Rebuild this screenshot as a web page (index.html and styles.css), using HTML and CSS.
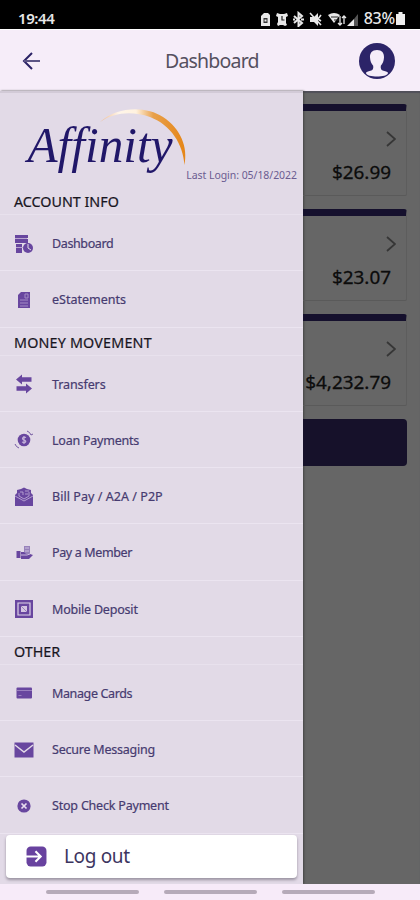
FILE: index.html
```html
<!DOCTYPE html>
<html lang="en">
<head>
<meta charset="utf-8">
<title>Dashboard</title>
<link rel="stylesheet" href="styles.css">
</head>
<body>
<div class="status">
  <span class="clock">19:44</span>
  <svg class="status-icons" width="102" height="16" viewBox="0 0 102 16" fill="#e8e8e8">
    <path d="M1 5 4 2h4l2 2v11H1z"/><path d="M3.500 7h4v5h-4z" fill="#333"/><path d="M4.500 8.500h2v2h-2z"/>
    <path d="M17 2l3 1h4l3-1 1 3-2 1v6l1 2-2 1-2-1h-3l-2 1-1-2 1-2V6l-2-1z"/><path d="M22 5v4h2.500" fill="none" stroke="#222" stroke-width="1.200"/>
    <path d="M34 5l8 7-3.500 3V2L42 5l-8 7M33 8.500h2M41 8.500h3" fill="none" stroke="#e8e8e8" stroke-width="2"/>
    <path d="M50 6h4l4-4v13l-4-4h-4z"/><path d="M50 2l11 12M61 4l-3 4 3 2" stroke="#e8e8e8" stroke-width="1.600" fill="none"/>
    <path d="M68 4q6-4 12 0l-6 8z"/><path d="M71 6h7M74 9h5" stroke="#222"/><path d="M80 5v9M78 12l2 2 2-2M84 13V5M82 7l2-2 2 2" fill="none" stroke="#e8e8e8" stroke-width="1.300"/>
    <path d="M87 15 94 8v7z"/><path d="M94 8l4-5v12h-4z" fill="#555"/>
  </svg>
  <span class="percent">83%</span>
  <svg width="9" height="13" viewBox="0 0 9 13" fill="#eee"><path d="M2.500 0h4v2H9v11H0V2h2.500z"/></svg>
</div>
<header class="header">
  <svg class="back" width="19" height="18" viewBox="0 0 19 18" fill="none" stroke="#2b2266" stroke-width="2"><path d="M10 1 2 9l8 8"/><path d="M2 9h16" stroke="#5c5585"/></svg>
  <h1>Dashboard</h1>
  <svg class="avatar" width="36" height="36" viewBox="0 0 36 36"><circle cx="18" cy="18" r="18" fill="#2c2468"/><path d="M18 7c5 0 7.200 3 7 7.500-.2 3.800-1.300 6.200-3.200 8.200-.4 3 .4 4.500 2.700 5.100 2.500.8 4.500 1 4.500 2.200 0 2.500-6 3.500-11 3.500S7 32.500 7 30c0-1.200 2-1.400 4.500-2.200 2.300-.6 3.100-2.100 2.700-5.100-1.900-2-3-4.400-3.200-8.200C10.800 10 13 7 18 7z" fill="#f5edf9"/></svg>
</header>
<main class="stage">
  <aside class="drawer">
    <div class="brand">
      <svg class="logo" width="170" height="80" viewBox="20 100 170 80">
        <defs><linearGradient id="arc" x1="100" x2="186" y1="0" y2="0" gradientUnits="userSpaceOnUse"><stop offset="0" stop-color="#eebc91"/><stop offset=".22" stop-color="#fff5e9"/><stop offset=".42" stop-color="#fff2df"/><stop offset=".62" stop-color="#e8a04b"/><stop offset="1" stop-color="#e58516"/></linearGradient></defs>
        <path d="M100 122C118 106 146 106 163 117 181 129 188 147 184.500 165 183 144 171 125 150 117 132 111 115 112 100 122z" fill="url(#arc)"/>
        <text x="27.500" y="162" textLength="145" lengthAdjust="spacingAndGlyphs" class="wordmark">Affinity</text>
      </svg>
      <p class="last">Last Login: 05/18/2022</p>
    </div>
    <h2 class="s1">ACCOUNT INFO</h2>
    <a class="row"><svg viewBox="0 0 20 20"><path d="M1 1h13v3H1zM1 5h13v4H1zM2 10h6v3H2zM2 14h6v5H2z"/><circle cx="14" cy="14" r="5"/><path d="M14 10v4l3 2" stroke="#e3dbe8" fill="none"/><path d="M1 4.500h12M2 13.500h7" stroke="#b9a5d0" fill="none"/></svg><span class="t1">Dashboard</span></a>
    <a class="row"><svg viewBox="0 0 20 20"><path d="M7 2h9v16H4V5z"/><path d="M11 4h3v4h-3zM6 10h8M6 13h8M6 16h8" stroke="#a48cc6" fill="none"/></svg><span class="t2">eStatements</span></a>
    <h2 class="s2">MONEY MOVEMENT</h2>
    <a class="row"><svg viewBox="0 0 20 20"><path d="M2 5.500 8 .5v2.800h9.500v4.400H8v2.800zM18 14.500l-6-5v2.800H2.500v4.400H12v2.800z"/></svg><span class="t3">Transfers</span></a>
    <a class="row"><svg viewBox="0 0 20 20"><circle cx="10" cy="10" r="6.300"/><path d="M12 7.500c-3-1.500-5 1.500-2 2.500s2 3.500-2 2M10 6v8" stroke="#c3b1d8" fill="none" stroke-width="1.200"/><path d="M1 14q1 3 4 4M13 1q3 1 4 4l2-1" fill="none" stroke="#755aa2"/></svg><span class="t4">Loan Payments</span></a>
    <a class="row"><svg viewBox="0 0 20 20"><path d="M1 8l2-2V3l4-1 3-1.500L13 2l4 1v3l2 2v11H1z"/><path d="M1 9l9 5 9-5M5 6v3l5 3 5-3V5M6 5h3v3M11 4h4M11 7h3" stroke="#b9a5d4" stroke-width=".9" fill="none"/></svg><span class="t5">Bill Pay / A2A / P2P</span></a>
    <a class="row"><svg viewBox="0 0 20 20"><path d="M10 3h6v9h-6z" fill="#9782ba"/><path d="M2.500 8h4v7h-4zM7 9h3l2 2h4l3 1-4 4H7z"/><path d="M7 12h6l3-1M11 5h4M11 8h4" stroke="#cdbde0" fill="none"/></svg><span class="t6">Pay a Member</span></a>
    <a class="row"><svg viewBox="0 0 20 20"><path d="M1 1h18v18H1z"/><path d="M4 4h12v12H4z" fill="none" stroke="#ded3e8" stroke-width="1.200"/><path d="M7 7h6v6H7z" fill="#d4c5e1"/><path d="M7 7l6 6" stroke="#9782ba"/></svg><span class="t7">Mobile Deposit</span></a>
    <h2 class="s3">OTHER</h2>
    <a class="row"><svg viewBox="0 0 20 20"><rect x="2.500" y="4.500" width="15.500" height="11" rx="1"/><path d="M3 7.500h15M4.500 12.500h3" stroke="#9a80c0" fill="none"/></svg><span class="t8">Manage Cards</span></a>
    <a class="row"><svg viewBox="0 0 20 20"><path d="M.5 2.500h19v15H.5z"/><path d="M1 5l9 7 9-7" stroke="#e3dbe8" stroke-width="1.500" fill="none"/></svg><span class="t9">Secure Messaging</span></a>
    <a class="row"><svg viewBox="0 0 20 20"><circle cx="10" cy="10" r="6.600"/><path d="M7.500 7.500l5 5M12.500 7.500l-5 5" stroke="#e8ddf0" stroke-width="1.700"/></svg><span class="t10">Stop Check Payment</span></a>
    <a class="logout"><svg viewBox="0 0 20 20"><rect x=".5" y=".5" width="19" height="19" rx="4"/><path d="M0 10h14M9 5l5 5-5 5" stroke="#fff" stroke-width="2" fill="none"/></svg><span>Log out</span></a>
  </aside>
  <section class="accounts">
    <article class="card"><svg class="chev" viewBox="0 0 10 16"><path d="M1 1l8 7-8 7"/></svg><span>$26.99</span></article>
    <article class="card"><svg class="chev" viewBox="0 0 10 16"><path d="M1 1l8 7-8 7"/></svg><span>$23.07</span></article>
    <article class="card"><svg class="chev" viewBox="0 0 10 16"><path d="M1 1l8 7-8 7"/></svg><span>$4,232.79</span></article>
    <div class="action"></div>
  </section>
</main>
<footer class="nav"><i></i><i></i><i></i></footer>
</body>
</html>
```
FILE: styles.css
```css
* { box-sizing: border-box; }
body { margin: 0; width: 420px; height: 900px; overflow: hidden; display: flex; flex-direction: column; background: #f6edf9; font-family: "Noto Sans", sans-serif; }
h1, h2, p { margin: 0; font-weight: 400; white-space: nowrap; }
.status { height: 29px; flex: none; background: #000; color: #e8e8e8; display: flex; align-items: center; padding: 8px 15px 0 18px; }
.clock { font-size: 15px; font-weight: 600; letter-spacing: -.4px; flex: 1; line-height: 16px; padding-bottom: 2px; }
.status-icons { margin-right: 2px; }
.percent { font-size: 16px; font-weight: 500; letter-spacing: -.2px; margin-right: 1px; line-height: 16px; padding-bottom: 2px; }
.header { height: 62px; flex: none; display: grid; grid-template-columns: 137px 1fr 61px; align-items: center; border-top: 1px solid #fff; }
.back { margin-left: 22px; }
.header h1 { font-size: 19.5px; line-height: 24px; letter-spacing: -.8px; color: #55505f; padding-left: 28px; }
.stage { height: 793px; flex: none; display: flex; background: #666; box-shadow: inset 0 2px 1px #51505a; }
.drawer { width: 303px; flex: none; background: #e2dae7; border-top: 2px solid #d2cad7; box-shadow: 1px 0 2px #444; display: flex; flex-direction: column; }
.brand { height: 94px; flex: none; display: grid; grid-template-columns: 1fr; }
.logo { grid-area: 1 / 1; margin: 7px 0 0 20px; }
.wordmark { font: italic 50px "Liberation Serif", serif; fill: #211769; }
.last { grid-area: 1 / 1; align-self: end; justify-self: end; font-size: 10.5px; line-height: 14px; color: #6b5c91; margin: 0 6px 5px 0; letter-spacing: -.05px; }
h2 { height: 28px; flex: none; padding-left: 14px; font-size: 14.3px; line-height: 29px; color: #18151e; border-bottom: 1px solid #e8e1ed; -webkit-text-stroke: .2px #18151e; }
.s2 { letter-spacing: .2px; }
.row { height: 56.25px; flex: none; display: flex; align-items: center; gap: 18px; padding: 2px 0 0 14px; border-bottom: 1px solid #ebe4f0; color: #463b70; font-size: 12.5px; white-space: nowrap; -webkit-text-stroke: .2px #463b70; }
.row svg { width: 20px; height: 20px; fill: #68469f; }
.t1 { letter-spacing: -.38px; }
.t3 { letter-spacing: -.1px; }
.t4 { letter-spacing: -.23px; }
.t5 { letter-spacing: .05px; }
.t6 { letter-spacing: -.37px; }
.t7 { letter-spacing: -.2px; }
.t8 { letter-spacing: -.37px; }
.t9 { letter-spacing: -.22px; }
.t10 { letter-spacing: -.2px; }
.logout { height: 43px; flex: none; width: 291px; margin: 1px 0 0 6px; padding-left: 20px; display: flex; align-items: center; gap: 17px; background: #fff; border-radius: 4px; box-shadow: 0 2px 3px #9992a0; color: #3d355f; font-size: 19px; letter-spacing: -.35px; }
.logout svg { width: 21px; height: 21px; fill: #68429f; }
.accounts { flex: 1; padding: 13px 13px 0 0; display: flex; flex-direction: column; gap: 13px; }
.card { height: 92px; border-top: 7px solid #15102d; border-right: 1px solid #5d5d5d; border-bottom: 1px solid #5a5a5a; border-radius: 0 3px 2px 0; display: flex; flex-direction: column; align-items: flex-end; padding: 20px 10px 0 0; color: #0c0c0c; font-size: 18.9px; }
.card span { line-height: 24px; margin: 13px 5px 0 0; -webkit-text-stroke: .3px #0c0c0c; }
.chev { width: 10px; height: 16px; flex: none; fill: none; stroke: #363636; stroke-width: 1.8; }
.action { height: 47px; background: #16112a; border-radius: 0 4px 4px 0; }
.nav { height: 16px; flex: none; display: flex; gap: 25px; padding: 6px 0 0 46px; background: #f7ebf9; }
.nav i { width: 93px; height: 4px; border-radius: 2px; background: #b6aab9; }
```
